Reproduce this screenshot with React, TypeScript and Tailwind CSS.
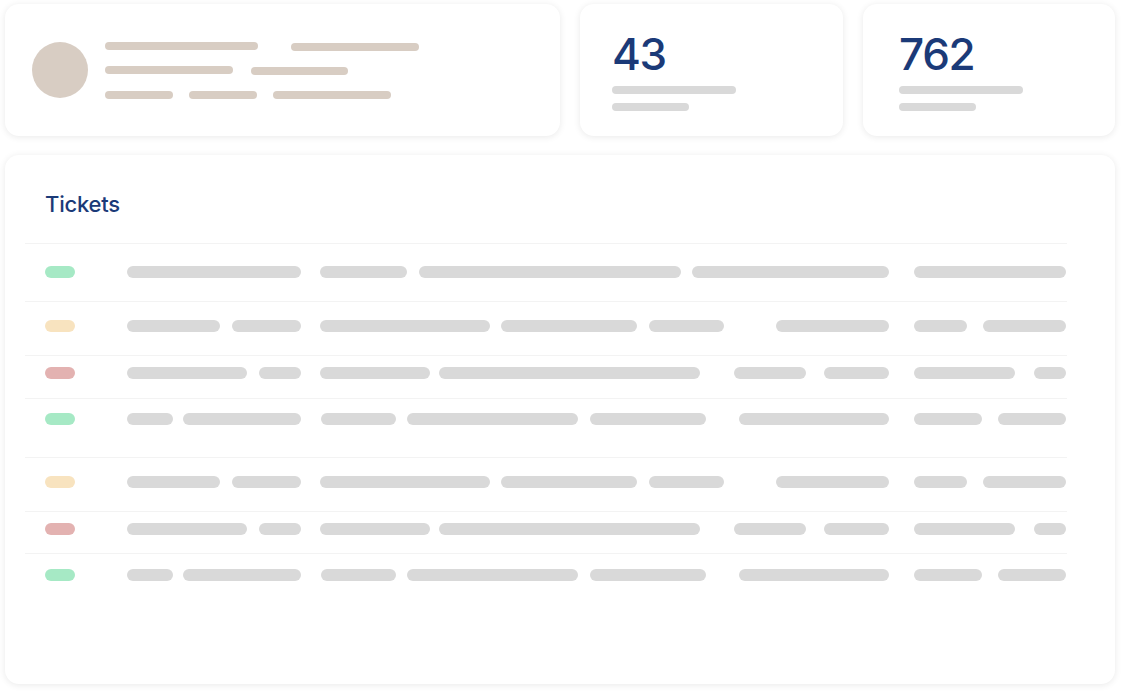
import type { CSSProperties } from "react";

// [width, gapBefore]
type Bar = [number, number];

type Row = {
  status: "green" | "yellow" | "red";
  pad: string;
  a: Bar[];
  left: Bar[];
  right: Bar[];
  d: Bar[];
};

const pill = {
  green: "bg-[#a6e9c5]",
  yellow: "bg-[#f8e3bf]",
  red: "bg-[#e3b2b1]",
};

const rowB: Omit<Row, "status" | "pad"> = {
  a: [[93, 0], [69, 12]],
  left: [[170, 0], [136, 11], [75, 12]],
  right: [[113, 0]],
  d: [[53, 0], [83, 16]],
};
const rowC: Omit<Row, "status" | "pad"> = {
  a: [[120, 0], [42, 12]],
  left: [[110, 0], [261, 9]],
  right: [[72, 0], [65, 18]],
  d: [[101, 0], [32, 19]],
};
const rowD: Omit<Row, "status" | "pad"> = {
  a: [[46, 0], [118, 10]],
  left: [[75, 1], [171, 11], [116, 12]],
  right: [[150, 0]],
  d: [[68, 0], [68, 16]],
};

const rows: Row[] = [
  {
    status: "green",
    pad: "pt-[22px] pb-[23px]",
    a: [[174, 0]],
    left: [[87, 0], [262, 12]],
    right: [[197, 0]],
    d: [[152, 0]],
  },
  { status: "yellow", pad: "pt-[18px] pb-[23px]", ...rowB },
  { status: "red", pad: "pt-[11px] pb-[19px]", ...rowC },
  { status: "green", pad: "pt-[14px] pb-[32px]", ...rowD },
  { status: "yellow", pad: "pt-[18px] pb-[23px]", ...rowB },
  { status: "red", pad: "pt-[11px] pb-[18px]", ...rowC },
  { status: "green", pad: "pt-[15px] pb-[20px]", ...rowD },
];

function Bars({ bars }: { bars: Bar[] }) {
  return (
    <div className="flex">
      {bars.map(([w, ml], i) => {
        const s: CSSProperties = { width: w, marginLeft: ml };
        return <div key={i} className="h-3 rounded-full bg-[#d9d9d9]" style={s} />;
      })}
    </div>
  );
}

function Line({ w, className = "" }: { w: number; className?: string }) {
  return <div className={`h-2 rounded-full ${className}`} style={{ width: w }} />;
}

function StatCard({ value, w, className }: { value: string; w: [number, number]; className: string }) {
  return (
    <div className={`h-[132px] rounded-[14px] bg-white shadow-[0_1px_7px_rgba(0,0,0,0.09)] pt-[28px] ${className}`}>
      <div className="text-[44px] leading-[44px] font-medium tracking-[-0.03em] text-[#1b3a78]">{value}</div>
      <Line w={w[0]} className="mt-[10px] bg-[#d9d9d9]" />
      <Line w={w[1]} className="mt-[9px] bg-[#d9d9d9]" />
    </div>
  );
}

export default function App() {
  return (
    <div
      className="min-h-[694px] bg-white pl-[5px] pr-[9px] pt-1"
      style={{ fontFamily: "Inter, 'Noto Sans', sans-serif" }}
    >
      {/* top row */}
      <div className="flex gap-5">
        <div className="flex h-[132px] w-[555px] items-center rounded-[14px] bg-white pl-[27px] shadow-[0_1px_7px_rgba(0,0,0,0.09)]">
          <div className="h-14 w-14 shrink-0 rounded-full bg-[#d8cdc3]" />
          <div className="ml-[17px] flex flex-col">
            <div className="flex items-start">
              <Line w={153} className="bg-[#d8cdc3]" />
              <Line w={128} className="ml-[33px] mt-px bg-[#d8cdc3]" />
            </div>
            <div className="mt-[15px] flex items-start">
              <Line w={128} className="bg-[#d8cdc3]" />
              <Line w={97} className="ml-[18px] mt-px bg-[#d8cdc3]" />
            </div>
            <div className="mt-[16px] flex">
              <Line w={68} className="bg-[#d8cdc3]" />
              <Line w={68} className="ml-4 bg-[#d8cdc3]" />
              <Line w={118} className="ml-4 bg-[#d8cdc3]" />
            </div>
          </div>
        </div>
        <StatCard value="43" w={[124, 77]} className="w-[263px] pl-[32px]" />
        <StatCard value="762" w={[124, 77]} className="flex-1 pl-[36px]" />
      </div>

      {/* tickets */}
      <div className="mt-[19px] h-[529px] rounded-[14px] bg-white pt-[35px] shadow-[0_1px_7px_rgba(0,0,0,0.09)]">
        <h2 className="pl-10 text-[22px] leading-7 font-medium tracking-[-0.01em] text-[#1b3a78]">Tickets</h2>
        <div className="ml-5 mr-12 mt-[25px]">
          {rows.map((r, i) => (
            <div key={i} className={`flex border-t border-[#f3f3f3] pl-5 ${r.pad}`}>
              <div className="w-[82px] shrink-0">
                <div className={`h-3 w-[30px] rounded-full ${pill[r.status]}`} />
              </div>
              <div className="flex w-[174px] shrink-0 justify-end">
                <Bars bars={r.a} />
              </div>
              <div className="ml-[19px] flex w-[569px] shrink-0 justify-between">
                <Bars bars={r.left} />
                <Bars bars={r.right} />
              </div>
              <div className="ml-[25px] w-[152px] shrink-0">
                <Bars bars={r.d} />
              </div>
            </div>
          ))}
        </div>
      </div>
    </div>
  );
}
